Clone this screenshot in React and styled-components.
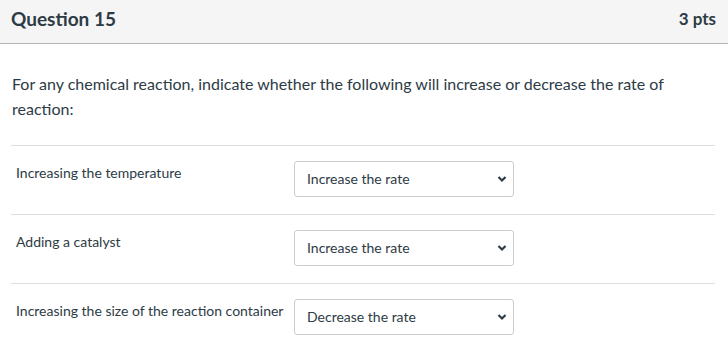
import styled, { createGlobalStyle } from "styled-components";

const GlobalStyle = createGlobalStyle`
  body {
    margin: 0;
    background: #ffffff;
    font-family: Lato, "Liberation Sans", sans-serif;
    color: #2d3b45;
  }
`;

const Card = styled.div`
  width: 728px;
  height: 364px;
  overflow: hidden;
`;

const Header = styled.div`
  height: 43px;
  display: flex;
  align-items: center;
  justify-content: space-between;
  padding: 0 12px 0 11px;
  background: #f5f5f5;
  border-bottom: 1px solid #b4b4b4;
`;

const Title = styled.h2`
  margin: -7px 0 0;
  font-size: 19px;
  font-weight: 700;
`;

const Points = styled.span`
  font-size: 17px;
  font-weight: 700;
  margin-top: -6px;
`;

const Body = styled.div`
  padding: 27px 13px 0 11px;
`;

const Prompt = styled.p`
  margin: 0 0 24px 1px;
  font-size: 16px;
  line-height: 25px;
`;

const Row = styled.div`
  display: flex;
  align-items: flex-start;
  box-sizing: border-box;
  border-top: 1px solid #dcdfe1;
  height: 69px;
  padding-top: 15px;
`;

const Label = styled.div`
  width: 278px;
  padding: 3px 0 0 5px;
  font-size: 14px;
  line-height: 18px;
`;

const SelectBox = styled.div`
  position: relative;
  width: 220px;
  height: 36px;
  box-sizing: border-box;
  border: 1px solid #c7cdd1;
  border-radius: 3px;
  display: flex;
  align-items: center;
  padding: 0 0 2px 12px;
  font-size: 14px;
  background: #fff;
`;

const Chevron = styled.svg`
  position: absolute;
  right: 6px;
  top: 50%;
  margin-top: -4px;
`;

const rows = [
  { label: "Increasing the temperature", value: "Increase the rate" },
  { label: "Adding a catalyst", value: "Increase the rate" },
  { label: "Increasing the size of the reaction container", value: "Decrease the rate" },
];

export default function App() {
  return (
    <Card>
      <GlobalStyle />
      <Header>
        <Title>Question 15</Title>
        <Points>3 pts</Points>
      </Header>
      <Body>
        <Prompt>
          For any chemical reaction, indicate whether the following will increase or decrease the rate of reaction:
        </Prompt>
        {rows.map((r) => (
          <Row key={r.label}>
            <Label>{r.label}</Label>
            <SelectBox>
              {r.value}
              <Chevron width="10" height="8" viewBox="0 0 10 8">
                <path d="M1.5 2 L5 5.5 L8.5 2" fill="none" stroke="#2d3b45" strokeWidth="2.2" />
              </Chevron>
            </SelectBox>
          </Row>
        ))}
      </Body>
    </Card>
  );
}
